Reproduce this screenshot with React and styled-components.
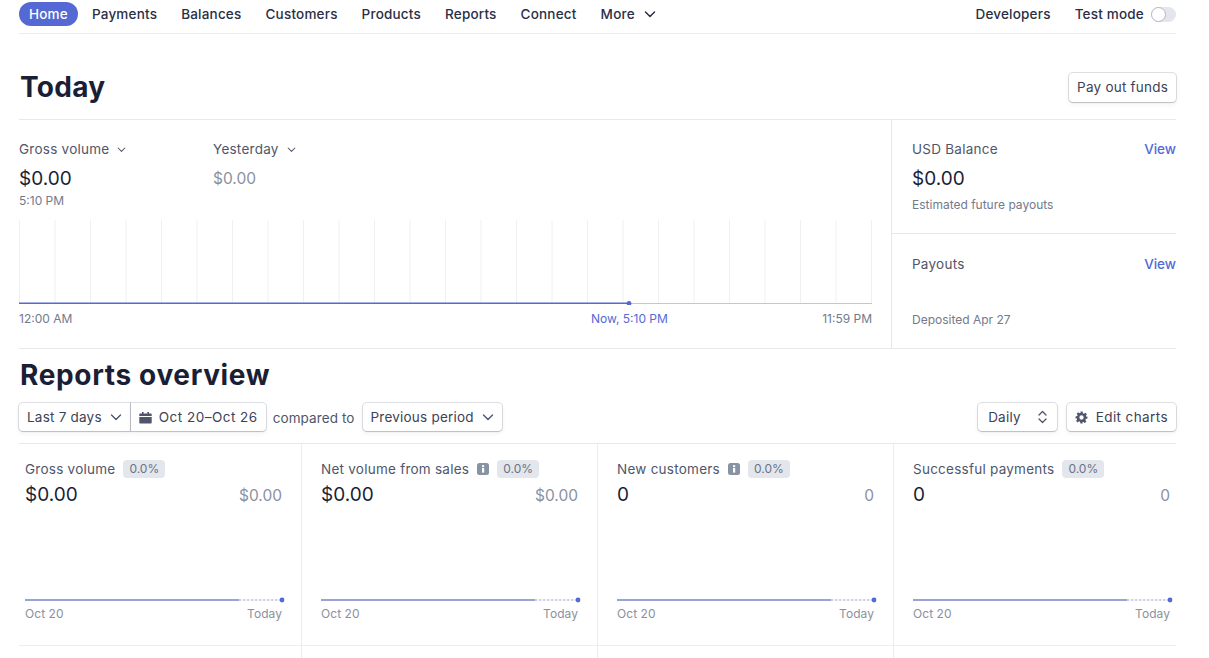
import React from "react";
import styled, { createGlobalStyle } from "styled-components";

const Global = createGlobalStyle`
  html, body { margin: 0; padding: 0; background: #fff; height: 658px; overflow: hidden; }
  body { font-family: Inter, "Liberation Sans", sans-serif; color: #1a1f36; -webkit-font-smoothing: antialiased; }
`;

const Page = styled.div`
  width: 1157px;
  margin-left: 19px;
  height: 658px;
`;
const Nav = styled.nav`
  height: 31px;
  padding-top: 2px;
  border-bottom: 1px solid #ebedf0;
  display: flex;
  align-items: flex-start;
  justify-content: space-between;
`;
const NavGroup = styled.div`
  display: flex;
  align-items: center;
  gap: ${p => p.$gap}px;
`;
const NavItem = styled.span`
  font-size: 13.5px;
  font-weight: 500;
  letter-spacing: 0.2px;
  line-height: 24px;
  color: ${p => (p.$active ? "#fff" : "#2a2f45")};
  background: ${p => (p.$active ? "#5469d4" : "transparent")};
  border-radius: 12px;
  padding: ${p => (p.$active ? "0 10px" : "0")};
  display: inline-flex;
  align-items: center;
  gap: 9px;
`;
const Toggle = styled.span`
  width: 25px;
  height: 15px;
  border-radius: 8px;
  background: #e3e6ef;
  margin-left: -17px;
  display: block;
  position: relative;
  &::after {
    content: "";
    position: absolute;
    left: 0;
    top: 0;
    width: 13px;
    height: 13px;
    border-radius: 50%;
    background: #fff;
    border: 1px solid #b4b8c4;
  }
`;
const TodayHead = styled.header`
  height: 64px;
  padding-top: 21px;
  display: flex;
  align-items: center;
  justify-content: space-between;
  border-bottom: 1px solid #e6e8ec;
`;
const Title = styled.h1`
  margin: 0;
  font-size: 28px;
  line-height: 34px;
  font-weight: 700;
  letter-spacing: 0.3px;
  color: #1a1f36;
  margin-left: 1px;
`;
const Button = styled.button`
  font: 400 13.5px/20px Inter, sans-serif;
  color: #3c4257;
  background: #fff;
  border: 0;
  border-radius: 4px;
  height: 29px;
  padding: 0 ${p => p.$pad || 8}px;
  box-shadow: 0 0 0 1px rgba(60, 66, 87, 0.16), 0 1px 1px rgba(0, 0, 0, 0.12), 0 2px 5px rgba(60, 66, 87, 0.08);
  display: inline-flex;
  align-items: center;
  gap: ${p => p.$gap || 8}px;
  white-space: nowrap;
  letter-spacing: ${p => p.$ls || 0.22}px;
`;
const TodayBody = styled.section`
  display: grid;
  grid-template-columns: 873px 1fr;
  height: 228px;
  border-bottom: 1px solid #e6e8ec;
`;
const ChartCol = styled.div`
  border-right: 1px solid #e6e8ec;
  padding-top: 20px;
  padding-right: 19px;
`;
const Metrics = styled.div`
  display: flex;
  height: 80px;
`;
const Metric = styled.div`
  width: 194px;
`;
const Label = styled.div`
  font-size: 13.5px;
  letter-spacing: 0.25px;
  line-height: 18px;
  font-weight: 400;
  color: #4f566b;
  display: flex;
  align-items: center;
  gap: 8px;
`;
const Amount = styled.div`
  font-size: 19px;
  line-height: 24px;
  color: #1a1f36;
  margin-top: 9px;
`;
const MutedAmount = styled.div`
  font-size: 15.5px;
  line-height: 24px;
  color: #8b909e;
  margin-top: 9px;
`;
const Small = styled.div`
  font-size: 12px;
  line-height: 16px;
  color: #727a8c;
  margin-top: ${p => p.$top || 2}px;
`;
const ChartLabels = styled.div`
  display: grid;
  grid-template-columns: 572px 1fr auto;
  font-size: 12px;
  line-height: 16px;
  color: #727a8c;
  margin-top: 6px;
`;
const NowLabel = styled.span`
  color: #5469d4;
`;
const Side = styled.div`
  display: flex;
  flex-direction: column;
`;
const SideBlock = styled.div`
  height: ${p => p.$h}px;
  padding: ${p => p.$top}px 0 0 20px;
  box-sizing: border-box;
  border-bottom: ${p => (p.$line ? "1px solid #e6e8ec" : "0")};
`;
const SideHead = styled.div`
  display: flex;
  justify-content: space-between;
  align-items: center;
`;
const ViewLink = styled.span`
  font-size: 13.5px;
  line-height: 18px;
  color: #5469d4;
  font-weight: 500;
`;
const Overview = styled.h2`
  margin: 9px 0 0 1px;
  font-size: 28px;
  line-height: 34px;
  font-weight: 700;
  letter-spacing: 0.65px;
  color: #1a1f36;
`;
const Toolbar = styled.div`
  display: flex;
  align-items: flex-start;
  justify-content: space-between;
  height: 29px;
  margin-top: 11px;
  padding-bottom: 11px;
  border-bottom: 1px solid #e6e8ec;
`;
const ToolGroup = styled.div`
  display: flex;
  align-items: center;
  gap: ${p => p.$gap}px;
  & button { height: 28px; }
`;
const Joined = styled.div`
  display: flex;
  & > button:first-child { border-radius: 4px 0 0 4px; }
  & > button:last-child { border-radius: 0 4px 4px 0; margin-left: 1px; }
`;
const Compared = styled.span`
  font-size: 13.5px;
  letter-spacing: 0.1px;
  color: #4f566b;
  margin: 2px 1px 0 0;
`;
const Cards = styled.div`
  display: grid;
  grid-template-columns: 283px 296px 296px 1fr;
  height: 201px;
  border-bottom: 1px solid #ebedf0;
`;
const NextRow = styled.div`
  display: grid;
  grid-template-columns: 283px 296px 296px 1fr;
  height: 12px;
`;
const EmptyCell = styled.div`
  border-right: ${p => (p.$last ? "0" : "1px solid #ebedf0")};
`;
const Card = styled.article`
  border-right: ${p => (p.$last ? "0" : "1px solid #ebedf0")};
  padding: 16px 0 0 ${p => (p.$first ? "6px" : "19px")};
  min-width: 0;
`;
const CardInner = styled.div`
  width: 257px;
`;
const CardHead = styled.div`
  display: flex;
  align-items: center;
  gap: 8px;
  height: 18px;
  font-size: 13.5px;
  letter-spacing: 0.25px;
  color: #4f566b;
  white-space: nowrap;
`;
const Pill = styled.span`
  font-size: 12px;
  letter-spacing: 0;
  line-height: 18px;
  padding: 0 6px;
  border-radius: 4px;
  background: #e3e6ec;
  color: #697386;
`;
const CardValues = styled.div`
  display: flex;
  justify-content: space-between;
  align-items: baseline;
  margin-top: 5px;
  height: 24px;
  font-size: 19px;
  line-height: 24px;
`;
const Previous = styled.span`
  font-size: 15.5px;
  color: #8b909e;
`;
const Spark = styled.svg`
  display: block;
  overflow: visible;
  margin-top: 90px;
`;
const SparkLabels = styled.div`
  display: flex;
  justify-content: space-between;
  font-size: 12px;
  letter-spacing: 0.05px;
  line-height: 16px;
  color: #8b909e;
  margin-top: 3px;
`;
const Chev = ({ size = 10, color = "#4f566b", w = 1.4 }) => (
  <svg width={size} height={size} viewBox="0 0 12 12" fill="none" stroke={color} strokeWidth={w} strokeLinecap="round" strokeLinejoin="round">
    <path d="M1.5 4l4.5 4.5L10.5 4" />
  </svg>
);
const Info = () => (
  <svg width="12" height="12" viewBox="0 0 12 12">
    <rect width="12" height="12" rx="2.5" fill="#8792a2" />
    <rect x="5" y="5" width="2.2" height="4.6" fill="#fff" />
    <rect x="5" y="2.2" width="2.2" height="1.9" fill="#fff" />
  </svg>
);
const Calendar = () => (
  <svg width="13" height="13" viewBox="0 0 13 13" fill="#4f566b">
    <path d="M1 2.5h11a.7.7 0 0 1 .7.7V5H.3V3.2A.7.7 0 0 1 1 2.5zM.3 6h12.4v5.8a.8.8 0 0 1-.8.8H1.1a.8.8 0 0 1-.8-.8z" />
    <rect x="3" y="1" width="1.6" height="2.5" />
    <rect x="8.4" y="1" width="1.6" height="2.5" />
  </svg>
);
const Updown = () => (
  <svg width="9" height="14" viewBox="0 0 9 14" fill="none" stroke="#4f566b" strokeWidth="1.3" strokeLinecap="round" strokeLinejoin="round">
    <path d="M1 5l3.5-3.500L8 5M1 9l3.500 3.500L8 9" />
  </svg>
);
const Gear = () => (
  <svg width="13" height="13" viewBox="0 0 24 24" fill="#4f566b">
    <path fillRule="evenodd" d="M10 1h4l.6 3.2 1.9.8 2.7-1.9 2.8 2.8-1.9 2.7.8 1.9L23 10v4l-3.1.6-.8 1.9 1.9 2.7-2.8 2.8-2.7-1.9-1.9.8L14 23h-4l-.6-3.1-1.9-.8-2.7 1.9-2.8-2.8 1.9-2.7-.8-1.9L1 14v-4l3.1-.6.8-1.9L3 4.9l2.8-2.8 2.7 1.9 1.9-.8zM12 8a4 4 0 1 0 0 8 4 4 0 0 0 0-8z" />
  </svg>
);
const TodayChart = () => (
  <svg width="853" height="85" viewBox="0 0 853 85" style={{ display: "block" }}>
    {Array.from({ length: 25 }, (_, i) => (
      <line key={i} x1={0.5 + i * 35.5} x2={0.5 + i * 35.5} y1="0" y2="84" stroke="#eff0f3" />
    ))}
    <line x1="0" x2="853" y1="83.5" y2="83.5" stroke="#c4c8d0" />
    <line x1="0" x2="610" y1="83.3" y2="83.3" stroke="#5469d4" strokeWidth="1.5" />
    <circle cx="610" cy="83.3" r="2.4" fill="#5469d4" />
  </svg>
);
const Sparkline = () => (
  <Spark width="257" height="6" viewBox="0 0 257 6">
    <line x1="0" x2="214" y1="3" y2="3" stroke="#7685c9" strokeWidth="1.6" />
    <line x1="214" x2="255" y1="3" y2="3" stroke="#9aa5d6" strokeWidth="1" strokeDasharray="2.5 1.5" />
    <circle cx="257" cy="3" r="2.4" fill="#5469d4" />
  </Spark>
);
const cards = [
  { t: "Gross volume", v: "$0.00", first: true },
  { t: "Net volume from sales", v: "$0.00", info: true },
  { t: "New customers", v: "0", info: true },
  { t: "Successful payments", v: "0", last: true },
];
export default function App() {
  return (
    <Page>
      <Global />
      <Nav>
        <NavGroup $gap={24}>
          <NavGroup $gap={14}>
            <NavItem $active>Home</NavItem>
            <NavItem>Payments</NavItem>
          </NavGroup>
          <NavItem>Balances</NavItem>
          <NavItem>Customers</NavItem>
          <NavItem>Products</NavItem>
          <NavItem>Reports</NavItem>
          <NavItem>Connect</NavItem>
          <NavItem>More <Chev size={12} color="#2a2f45" w={1.5} /></NavItem>
        </NavGroup>
        <NavGroup $gap={24}>
          <NavItem>Developers</NavItem>
          <NavItem>Test mode</NavItem>
          <Toggle />
        </NavGroup>
      </Nav>
      <TodayHead>
        <Title>Today</Title>
        <Button>Pay out funds</Button>
      </TodayHead>
      <TodayBody>
        <ChartCol>
          <Metrics>
            <Metric>
              <Label>Gross volume <Chev size={9} /></Label>
              <Amount>$0.00</Amount>
              <Small>5:10 PM</Small>
            </Metric>
            <Metric>
              <Label>Yesterday <Chev size={9} /></Label>
              <MutedAmount>$0.00</MutedAmount>
            </Metric>
          </Metrics>
          <TodayChart />
          <ChartLabels>
            <span>12:00 AM</span>
            <NowLabel>Now, 5:10 PM</NowLabel>
            <span>11:59 PM</span>
          </ChartLabels>
        </ChartCol>
        <Side>
          <SideBlock $h={114} $top={20} $line>
            <SideHead><Label>USD Balance</Label><ViewLink>View</ViewLink></SideHead>
            <Amount>$0.00</Amount>
            <Small $top={6}>Estimated future payouts</Small>
          </SideBlock>
          <SideBlock $h={114} $top={21}>
            <SideHead><Label>Payouts</Label><ViewLink>View</ViewLink></SideHead>
            <Small $top={39}>Deposited Apr 27</Small>
          </SideBlock>
        </Side>
      </TodayBody>
      <Overview>Reports overview</Overview>
      <Toolbar>
        <ToolGroup $gap={7}>
          <Joined>
            <Button>Last 7 days <Chev size={12} /></Button>
            <Button $gap={7} $ls={0.48}><Calendar /> Oct 20–Oct 26</Button>
          </Joined>
          <Compared>compared to</Compared>
          <Button>Previous period <Chev size={12} /></Button>
        </ToolGroup>
        <ToolGroup $gap={10}>
          <Button $pad={10} $gap={17}>Daily <Updown /></Button>
          <Button $ls={0.4}><Gear /> Edit charts</Button>
        </ToolGroup>
      </Toolbar>
      <Cards>
        {cards.map(c => (
          <Card key={c.t} $first={c.first} $last={c.last}>
            <CardInner>
              <CardHead>{c.t}{c.info && <Info />}<Pill>0.0%</Pill></CardHead>
              <CardValues><span>{c.v}</span><Previous>{c.v}</Previous></CardValues>
              <Sparkline />
              <SparkLabels><span>Oct 20</span><span>Today</span></SparkLabels>
            </CardInner>
          </Card>
        ))}
      </Cards>
      <NextRow>
        <EmptyCell />
        <EmptyCell />
        <EmptyCell />
        <EmptyCell $last />
      </NextRow>
    </Page>
  );
}
